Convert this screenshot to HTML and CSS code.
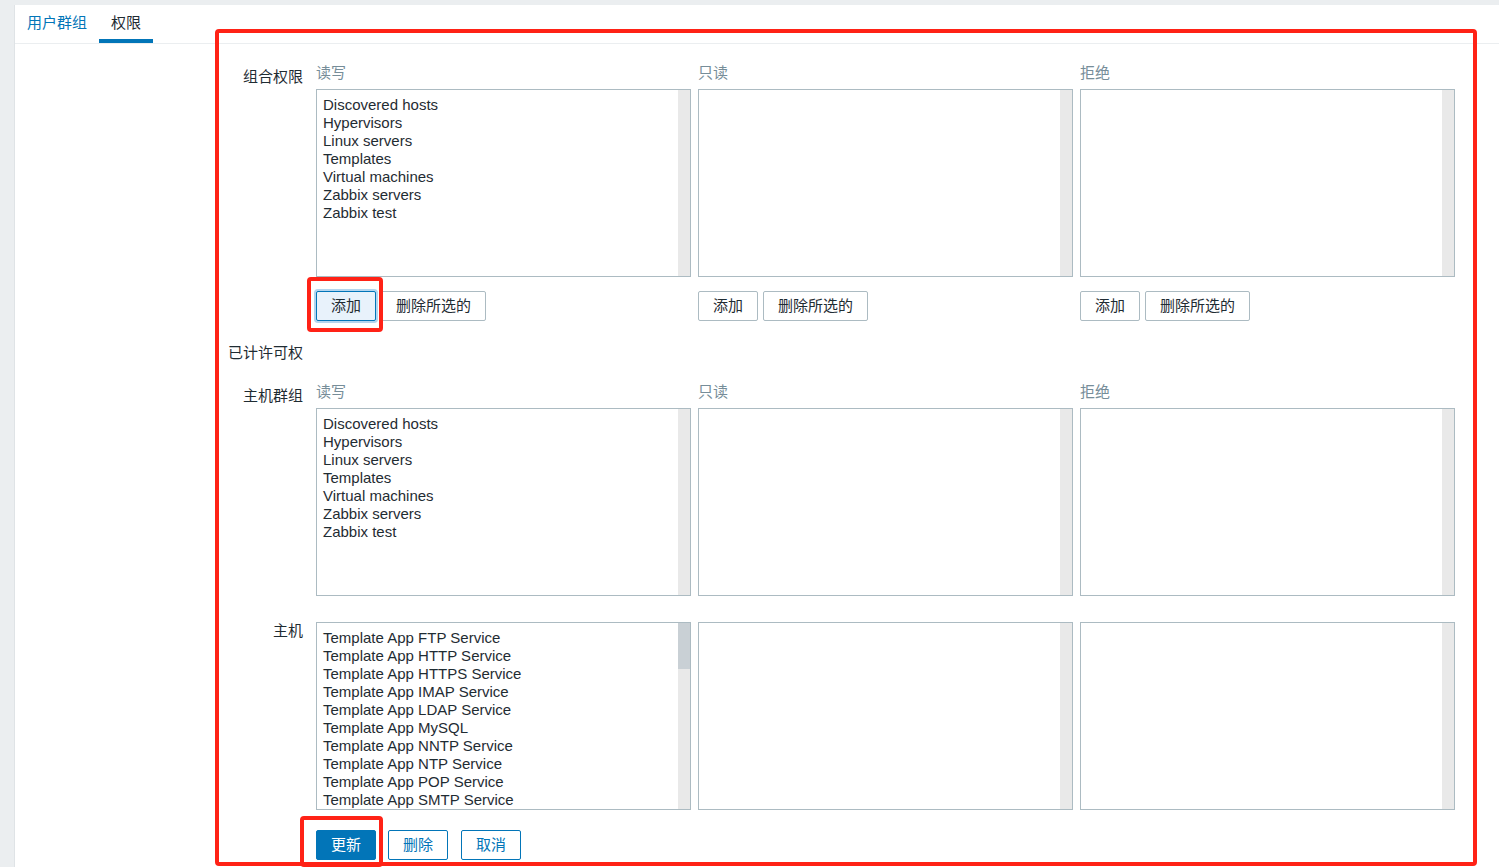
FILE: index.html
```html
<!DOCTYPE html>
<html lang="zh-CN">
<head>
<meta charset="utf-8">
<title>权限</title>
<link rel="stylesheet" href="styles.css">
</head>
<body>
<div class="page">
  <nav class="tabs">
    <a class="tab">用户群组</a>
    <a class="tab active">权限</a>
  </nav>
  <form class="form">
    <div class="row row-perm">
      <div class="label">组合权限</div>
      <div class="cols">
        <div class="col">
          <div class="col-head">读写</div>
          <div class="listbox">
            <ul class="items">
              <li>Discovered hosts</li>
              <li>Hypervisors</li>
              <li>Linux servers</li>
              <li>Templates</li>
              <li>Virtual machines</li>
              <li>Zabbix servers</li>
              <li>Zabbix test</li>
            </ul>
            <div class="track"></div>
          </div>
          <div class="btns">
            <button type="button" class="btn btn-focus">添加</button>
            <button type="button" class="btn">删除所选的</button>
          </div>
        </div>
        <div class="col">
          <div class="col-head">只读</div>
          <div class="listbox">
            <ul class="items"></ul>
            <div class="track"></div>
          </div>
          <div class="btns">
            <button type="button" class="btn">添加</button>
            <button type="button" class="btn">删除所选的</button>
          </div>
        </div>
        <div class="col">
          <div class="col-head">拒绝</div>
          <div class="listbox">
            <ul class="items"></ul>
            <div class="track"></div>
          </div>
          <div class="btns">
            <button type="button" class="btn">添加</button>
            <button type="button" class="btn">删除所选的</button>
          </div>
        </div>
      </div>
    </div>

    <div class="row row-note">
      <div class="label">已计许可权</div>
      <div></div>
    </div>

    <div class="row row-groups">
      <div class="label">主机群组</div>
      <div class="cols">
        <div class="col">
          <div class="col-head">读写</div>
          <div class="listbox">
            <ul class="items">
              <li>Discovered hosts</li>
              <li>Hypervisors</li>
              <li>Linux servers</li>
              <li>Templates</li>
              <li>Virtual machines</li>
              <li>Zabbix servers</li>
              <li>Zabbix test</li>
            </ul>
            <div class="track"></div>
          </div>
        </div>
        <div class="col">
          <div class="col-head">只读</div>
          <div class="listbox">
            <ul class="items"></ul>
            <div class="track"></div>
          </div>
        </div>
        <div class="col">
          <div class="col-head">拒绝</div>
          <div class="listbox">
            <ul class="items"></ul>
            <div class="track"></div>
          </div>
        </div>
      </div>
    </div>

    <div class="row row-hosts">
      <div class="label label-flush">主机</div>
      <div class="cols">
        <div class="col">
          <div class="listbox">
            <ul class="items">
              <li>Template App FTP Service</li>
              <li>Template App HTTP Service</li>
              <li>Template App HTTPS Service</li>
              <li>Template App IMAP Service</li>
              <li>Template App LDAP Service</li>
              <li>Template App MySQL</li>
              <li>Template App NNTP Service</li>
              <li>Template App NTP Service</li>
              <li>Template App POP Service</li>
              <li>Template App SMTP Service</li>
            </ul>
            <div class="track"><div class="thumb"></div></div>
          </div>
        </div>
        <div class="col">
          <div class="listbox">
            <ul class="items"></ul>
            <div class="track"></div>
          </div>
        </div>
        <div class="col">
          <div class="listbox">
            <ul class="items"></ul>
            <div class="track"></div>
          </div>
        </div>
      </div>
    </div>

    <div class="row row-actions">
      <div></div>
      <div class="actions">
        <button type="button" class="btn btn-primary">更新</button>
        <button type="button" class="btn btn-alt">删除</button>
        <button type="button" class="btn btn-alt btn-cancel">取消</button>
      </div>
    </div>
  </form>
</div>

<div class="mark mark-main"></div>
<div class="mark mark-add"></div>
<div class="mark mark-save"></div>
</body>
</html>
```

FILE: styles.css
```css
* { box-sizing: border-box; }
html, body { margin: 0; padding: 0; }
body {
  background: #ebeef0;
  font-family: "Liberation Sans", "Noto Sans CJK SC", sans-serif;
  font-size: 15px;
  color: #1f2c33;
  overflow: hidden;
  height: 867px;
}
.page {
  margin: 5px 0 0 14px;
  background: #fff;
  border-left: 1px solid #dfe3e6;
  height: 862px;
}
.tabs {
  display: flex;
  border-bottom: 1px solid #ebeef0;
  height: 39px;
}
.tab {
  display: block;
  height: 38px;
  padding: 2px 12px 0;
  line-height: 32px;
  border-bottom: 4px solid transparent;
  color: #0275b8;
  cursor: pointer;
}
.tab.active {
  color: #1f2c33;
  border-bottom-color: #0275b8;
}
.form {
  padding-top: 19px;
}
.row {
  display: grid;
  grid-template-columns: 288px 1139px;
  column-gap: 13px;
}
.label {
  text-align: right;
  line-height: 18px;
  padding-top: 5px;
}
.label-flush { padding-top: 0; }
.row-note { margin-top: 23px; }
.row-note .label { padding-top: 0; }
.row-groups { margin-top: 20px; }
.row-hosts { margin-top: 26px; }
.row-actions { margin-top: 20px; }
.cols {
  display: grid;
  grid-template-columns: repeat(3, 375px);
  column-gap: 7px;
}
.col-head {
  line-height: 18px;
  padding-top: 1px;
  margin-bottom: 7px;
  color: #768d99;
}
.listbox {
  height: 188px;
  border: 1px solid #acbbc2;
  display: flex;
  background: #fff;
}
.items {
  flex: 1;
  margin: 0;
  padding: 6px 6px 0;
  list-style: none;
  line-height: 18px;
  overflow: hidden;
  white-space: nowrap;
}
.track {
  width: 12px;
  background: #e9e9e9;
}
.thumb {
  height: 46px;
  background: #c9d0d5;
}
.btns {
  display: flex;
  gap: 5px;
  margin-top: 14px;
}
.actions {
  display: flex;
  gap: 12px;
}
.btn {
  height: 30px;
  min-width: 60px;
  padding: 0 14px;
  border: 1px solid #acbbc2;
  border-radius: 2px;
  background: #fff;
  font: inherit;
  color: #1f2c33;
  line-height: 28px;
  cursor: pointer;
}
.btn-focus {
  background: #e8f2fb;
  border-color: #0275b8;
  box-shadow: 0 0 0 2px #b3d5ef;
}
.btn-primary {
  background: #0275b8;
  border-color: #0275b8;
  color: #fff;
}
.btn-alt {
  border-color: #0275b8;
  color: #0275b8;
}
.btn-cancel { margin-left: 1px; }
.mark {
  position: absolute;
  border: 4px solid #ff2216;
  border-radius: 4px;
  pointer-events: none;
}
.mark-main { left: 215px; top: 29px; width: 1262px; height: 837px; }
.mark-add { left: 307px; top: 277px; width: 76px; height: 55px; }
.mark-save { left: 300px; top: 816px; width: 83px; height: 51px; }
```
